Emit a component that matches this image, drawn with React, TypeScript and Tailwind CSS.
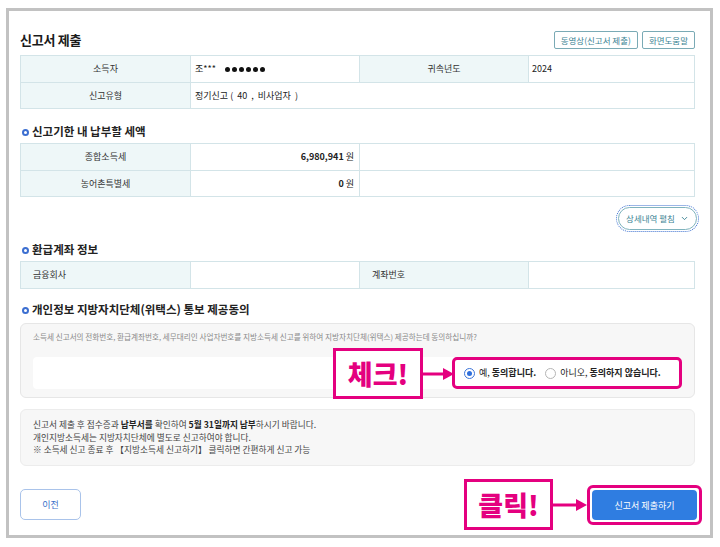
import { ChevronDown } from "lucide-react";
import type { ReactNode } from "react";

const MAG = "#e4007f";

function Heading({ children, className = "" }: { children: ReactNode; className?: string }) {
  return (
    <div className={`flex items-center h-[14px] text-[11.5px] font-bold text-[#222] ${className}`}>
      <span className="w-[7px] h-[7px] rounded-full border-[2px] border-[#3c6fd1] ml-[2px] mr-[3px] shrink-0" />
      {children}
    </div>
  );
}

function Arrow({ w }: { w: number }) {
  return (
    <svg width={w} height={14} viewBox={`0 0 ${w} 14`} className="shrink-0">
      <line x1="0" y1="7" x2={w - 9} y2="7" stroke={MAG} strokeWidth="3" />
      <polygon points={`${w - 11},1 ${w},7 ${w - 11},13`} fill={MAG} />
    </svg>
  );
}

export default function App() {
  return (
    <div className="w-[720px] h-[547px] bg-white pt-[8px] pl-[6px] font-['Noto_Sans_CJK_KR','Noto_Sans',sans-serif] text-[#222]">
      <div className="w-[707px] h-[530px] border-[3px] border-[#c2c2c2] pl-[11px] pr-[15px] pt-[20px]">
        {/* Header */}
        <div className="flex items-center justify-between h-[18px]">
          <div className="text-[13px] font-bold tracking-[-0.02em] text-[#1a1a1a]">신고서 제출</div>
          <div className="flex gap-[4px]">
            <button className="h-[18px] px-[6px] border border-[#7aaab5] rounded-[2px] text-[8.5px] text-[#3d8494] leading-none">
              동영상(신고서 제출)
            </button>
            <button className="h-[18px] px-[6px] border border-[#7aaab5] rounded-[2px] text-[8.5px] text-[#3d8494] leading-none">
              화면도움말
            </button>
          </div>
        </div>

        {/* Table 1 */}
        <div className="mt-[6px] border border-[#d3e4e8] text-[9px]">
          <div className="grid grid-cols-[169px_169px_169px_1fr] h-[26px]">
            <div className="bg-[#eef7f8] flex items-center justify-center text-[#333]">소득자</div>
            <div className="border-l border-[#d3e4e8] flex items-center pl-[4px]">
              조***
              <span className="ml-[9px] flex gap-[2px]">
                <span className="w-[5px] h-[5px] rounded-full bg-[#111]" />
                <span className="w-[5px] h-[5px] rounded-full bg-[#111]" />
                <span className="w-[5px] h-[5px] rounded-full bg-[#111]" />
                <span className="w-[5px] h-[5px] rounded-full bg-[#111]" />
                <span className="w-[5px] h-[5px] rounded-full bg-[#111]" />
                <span className="w-[5px] h-[5px] rounded-full bg-[#111]" />
              </span>
            </div>
            <div className="border-l border-[#d3e4e8] bg-[#eef7f8] flex items-center justify-center text-[#333]">귀속년도</div>
            <div className="border-l border-[#d3e4e8] flex items-center pl-[3px]">2024</div>
          </div>
          <div className="grid grid-cols-[169px_1fr] h-[26px] border-t border-[#d3e4e8]">
            <div className="bg-[#eef7f8] flex items-center justify-center text-[#333]">신고유형</div>
            <div className="border-l border-[#d3e4e8] flex items-center pl-[4px] whitespace-pre">정기신고 (  40  ,  비사업자  )</div>
          </div>
        </div>

        {/* Section 2 */}
        <Heading className="mt-[16px]">신고기한 내 납부할 세액</Heading>
        <div className="mt-[4px] border border-[#d3e4e8] text-[9px]">
          <div className="grid grid-cols-[169px_169px_1fr] h-[26px]">
            <div className="bg-[#eef7f8] flex items-center justify-center text-[#333]">종합소득세</div>
            <div className="border-l border-[#d3e4e8] flex items-center justify-end pr-[5px]">
              <span className="font-bold">6,980,941</span>&nbsp;원
            </div>
            <div className="border-l border-[#d3e4e8]" />
          </div>
          <div className="grid grid-cols-[169px_169px_1fr] h-[26px] border-t border-[#d3e4e8]">
            <div className="bg-[#eef7f8] flex items-center justify-center text-[#333]">농어촌특별세</div>
            <div className="border-l border-[#d3e4e8] flex items-center justify-end pr-[5px]">
              <span className="font-bold">0</span>&nbsp;원
            </div>
            <div className="border-l border-[#d3e4e8]" />
          </div>
        </div>

        <div className="mt-[10px] flex justify-end -mr-[2px]">
          <button className="h-[23px] w-[79px] rounded-full border border-[#7fb3bd] outline-1 outline-dotted outline-[#3a6fd0] outline-offset-[1px] flex items-center justify-center gap-[5px] text-[8.5px] text-[#3d8494]">
            상세내역 펼침
            <ChevronDown size={9} strokeWidth={2.5} />
          </button>
        </div>

        {/* Section 3 */}
        <Heading className="mt-[13px]">환급계좌 정보</Heading>
        <div className="mt-[4px] border border-[#d3e4e8] text-[9px] grid grid-cols-[169px_169px_169px_1fr] h-[28px]">
          <div className="bg-[#eef7f8] flex items-center pl-[12px] text-[#333]">금융회사</div>
          <div className="border-l border-[#d3e4e8]" />
          <div className="border-l border-[#d3e4e8] bg-[#eef7f8] flex items-center pl-[12px] text-[#333]">계좌번호</div>
          <div className="border-l border-[#d3e4e8]" />
        </div>

        {/* Section 4 */}
        <Heading className="mt-[14px]">개인정보 지방자치단체(위택스) 통보 제공동의</Heading>
        <div className="relative mt-[6px] h-[75px] rounded-[6px] border border-[#e6e6e6] bg-[#f7f7f7] px-[12px] pt-[8px]">
          <div className="text-[7.6px] text-[#8a8a8a] leading-[10px]">
            소득세 신고서의 전화번호, 환급계좌번호, 세무대리인 사업자번호를 지방소득세 신고를 위하여 지방자치단체(위택스) 제공하는데 동의하십니까?
          </div>
          <div className="mt-[15px] h-[32px] bg-white rounded-[4px] flex justify-end">
            <div className="h-[32px] w-[230px] border-[3px] border-[#e4007f] rounded-[5px] flex items-center pl-[9px] text-[9px] text-[#222]">
              <span className="w-[11px] h-[11px] rounded-full border border-[#3b74d8] flex items-center justify-center shrink-0">
                <span className="w-[5px] h-[5px] rounded-full bg-[#2f6fdc]" />
              </span>
              <span className="ml-[4px]">
                예, <span className="font-bold">동의합니다.</span>
              </span>
              <span className="ml-[9px] w-[11px] h-[11px] rounded-full border border-[#b5b5b5] bg-white shrink-0" />
              <span className="ml-[4px]">
                아니오, <span className="font-bold">동의하지 않습니다.</span>
              </span>
            </div>
          </div>
          {/* annotation */}
          <div className="absolute left-[312px] top-[24px] flex items-center">
            <div className="w-[90px] h-[51px] bg-white border-[3px] border-[#e4007f] flex items-center justify-center text-[27px] font-black text-[#e4007f] leading-none">
              체크!
            </div>
            <Arrow w={31} />
          </div>
        </div>

        {/* Notice */}
        <div className="mt-[11px] h-[57px] rounded-[6px] border border-[#ececec] bg-[#f7f7f7] px-[12px] pt-[9px] text-[8.7px] leading-[12.5px] text-[#444]">
          <div>
            신고서 제출 후 접수증과 <span className="font-bold text-[#222]">납부서를</span> 확인하여{" "}
            <span className="font-bold text-[#222]">5월 31일까지 납부</span>하시기 바랍니다.
          </div>
          <div>개인지방소득세는 지방자치단체에 별도로 신고하여야 합니다.</div>
          <div>※ 소득세 신고 종료 후 【지방소득세 신고하기】 클릭하면 간편하게 신고 가능</div>
        </div>

        {/* Bottom */}
        <div className="mt-[13px] flex items-center justify-between h-[51px]">
          <button className="w-[61px] h-[31px] rounded-[5px] border border-[#a9c3ea] text-[9px] text-[#3b6fc8]">
            이전
          </button>
          <div className="flex items-center -mr-[7px]">
            <div className="w-[89px] h-[51px] bg-white border-[3px] border-[#e4007f] flex items-center justify-center text-[27px] font-black text-[#e4007f] leading-none">
              클릭!
            </div>
            <Arrow w={34} />
            <div className="w-[115px] h-[40px] border-[3px] border-[#e4007f] rounded-[6px] p-[2px]">
              <button className="w-full h-full rounded-[4px] bg-[#2f7de1] text-white text-[9px]">
                신고서 제출하기
              </button>
            </div>
          </div>
        </div>
      </div>
    </div>
  );
}
